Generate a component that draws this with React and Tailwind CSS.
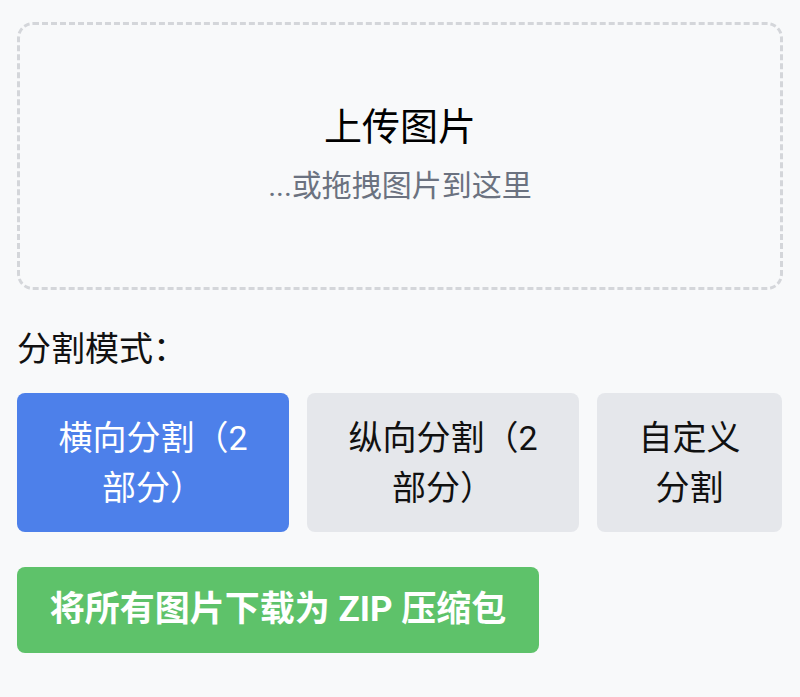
import { useState } from "react";

const modes = [
  { id: "horizontal", label: "横向分割（2部分）", width: "w-[272px]" },
  { id: "vertical", label: "纵向分割（2部分）", width: "w-[272px]" },
  { id: "custom", label: "自定义分割", width: "w-[185px]" },
];

export default function App() {
  const [mode, setMode] = useState("horizontal");

  return (
    <div className="min-h-screen bg-[#f8f9fa] px-[17px] pt-[22px] font-['Roboto','Noto_Sans_CJK_SC',sans-serif] text-[#111]">
      {/* upload area */}
      <div className="flex h-[268px] flex-col items-center justify-center rounded-2xl border-[3px] border-dashed border-[#d4d6da] pb-[6px]">
        <p className="text-[38px] leading-[56px] text-black">上传图片</p>
        <p className="mt-[9px] text-[30px] leading-[44px] text-[#6b7280]">...或拖拽图片到这里</p>
      </div>

      <p className="mt-[35px] text-[34px] leading-[48px]">分割模式：</p>

      <div className="mt-[20px] flex gap-[18px]">
        {modes.map((m) => (
          <button
            key={m.id}
            onClick={() => setMode(m.id)}
            className={`flex h-[139px] items-center justify-center rounded-lg px-8 text-center text-[34px] leading-[50px] ${m.width} ${
              mode === m.id ? "bg-[#4d80ea] text-white" : "bg-[#e5e7eb] text-[#111]"
            }`}
          >
            {m.label}
          </button>
        ))}
      </div>

      <button className="mt-[35px] flex h-[86px] w-[522px] items-center justify-center rounded-lg bg-[#5ec26a] text-[35px] font-bold leading-[50px] text-white">
        将所有图片下载为 ZIP 压缩包
      </button>
    </div>
  );
}
